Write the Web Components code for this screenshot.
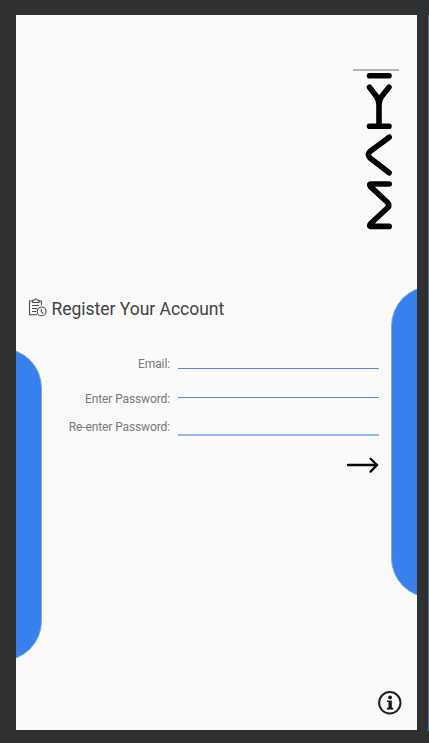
<!DOCTYPE html>
<html lang="en"><head><meta charset="utf-8"><title>Register</title>
<style>html,body{margin:0;height:100%;overflow:hidden;background:#2e3032}</style></head><body>
<register-page></register-page>
<script>
const define = (name, html) => customElements.define(name, class extends HTMLElement {
  constructor() {
    super();
    const t = document.createElement('template');
    t.innerHTML = html;
    this.attachShadow({mode: 'open'}).append(t.content.cloneNode(true));
  }
});

define('brand-mark', `<style>:host{display:block;width:46px;height:164px}svg{display:block}</style>
<svg width="46" height="164" viewBox="353 68 46 164" fill="none" stroke="#000" stroke-width="5.6" stroke-linecap="round" stroke-linejoin="round">
<path d="M353 70H399" stroke="#b3b3b3" stroke-width="2" stroke-linecap="butt"/>
<path d="M369.5 75.8H389"/>
<path d="M369.5 87.2L376.5 96.5Q379 100 379 105Q379 100 381.6 96.5L389 87.2M379 101V126M369.5 126.3H389"/>
<path d="M389.2 137.2L370 151.6Q366.6 154.7 370 158L389.2 172.7"/>
<path d="M389.2 184H371Q368.6 184.3 370.5 186.6L387.6 202.5Q390 205.2 387.6 207.8L370.5 223.8Q368.6 226.2 371 226.4H389.2"/></svg>`);

define('clipboard-icon', `<style>:host{display:block;width:20px;height:20px}svg{display:block}</style>
<svg width="20" height="20" viewBox="0 0 20 20" fill="none" stroke="#4a4a4a" stroke-width="1.05">
<path d="M5 2.9H1.5V16.8H9M10.5 2.9H13.4V7.2"/><path d="M4.6 4.5V2.3H6.2Q7.8-.2 9.4 2.3H11V4.5Z"/>
<path d="M4 7.5H11M4 10.5H9M4 13.5H8"/><circle cx="13.6" cy="13.4" r="4.4"/><path d="M13.3 10.8V13.6L15.4 15.5"/></svg>`);

define('page-heading', `<style>:host{display:flex;align-items:center;height:24px;font:17.5px/24px Roboto,sans-serif;color:#434343;white-space:nowrap}
clipboard-icon{margin-bottom:2px}
h1{margin:0 0 0 3.5px;font:inherit;letter-spacing:-.02px}</style>
<clipboard-icon></clipboard-icon><h1><slot></slot></h1>`);

define('form-field', `<style>:host{display:grid;grid-template-columns:154px 201px;column-gap:8px}
label{text-align:right;font:12px/16px Roboto,sans-serif;letter-spacing:-.12px;color:#797979;white-space:nowrap}
input{box-sizing:border-box;width:201px;height:16px;padding:0;border:0;border-bottom:var(--rule,1px) solid var(--tone,#4f8bed);background:none;outline:0;border-radius:0;margin-top:var(--drop,0)}</style>
<label for="i"><slot></slot></label><input id="i">`);

define('arrow-button', `<style>:host{display:block}button{display:block;border:0;background:none;padding:0}svg{display:block}</style>
<button aria-label="Continue"><svg width="34" height="20" viewBox="346 455 34 20" fill="none" stroke="#080808" stroke-width="2.3" stroke-linecap="round" stroke-linejoin="round"><path d="M348 465H377.2M370.6 458.7L377 465L370.6 471.6"/></svg></button>`);

define('info-button', `<style>:host{display:block}button{display:block;border:0;background:none;padding:0}svg{display:block}</style>
<button aria-label="Information"><svg width="26" height="26" viewBox="0 0 26 26"><circle cx="12.8" cy="12.8" r="10.7" fill="none" stroke="#222" stroke-width="2"/><circle cx="13.1" cy="7.4" r="1.9" fill="#111"/><path d="M10 10.4H14.8V17.7H16.2V19.5H10V17.7H11.5V12.1H10Z" fill="#111"/></svg></button>`);

define('side-pill', `<style>:host{display:block;width:80px;background:#3880ee;border-radius:40px;box-sizing:border-box;border:1px solid #77a9f4}</style>`);

define('register-page', `<style>
:host{display:block;box-sizing:border-box;width:429px;height:743px;padding:15px 12px 13px 16px;background:linear-gradient(#3d78b0,#3d78b0) 428px 15px/1px 716px no-repeat,#2e3032;overflow:hidden}
main{position:relative;display:flex;flex-direction:column;width:401px;height:715px;background:#fafafa;overflow:hidden}
brand-mark{align-self:flex-end;margin:53px 18px 0 0}
page-heading{margin:65px 0 0 12px}
form{display:flex;flex-direction:column;margin-top:35px}
.a{--drop:-3px}
.b{margin-top:19px;--drop:-9px}
.c{margin-top:12px;--drop:1px;--rule:2px;--tone:#92b9f8}
arrow-button{align-self:flex-end;margin:19px 37px 0 0}
info-button{align-self:flex-end;margin:auto 14px 14px 0}
side-pill{position:absolute}
.left{left:-54px;top:333px;height:313px}
.right{left:375px;top:271.4px;height:312px}
</style>
<main><side-pill class="left"></side-pill><side-pill class="right"></side-pill>
<brand-mark></brand-mark>
<page-heading>Register Your Account</page-heading>
<form><form-field class="a">Email:</form-field><form-field class="b">Enter Password:</form-field><form-field class="c">Re-enter Password:</form-field><arrow-button></arrow-button></form>
<info-button></info-button></main>`);
</script></body></html>
